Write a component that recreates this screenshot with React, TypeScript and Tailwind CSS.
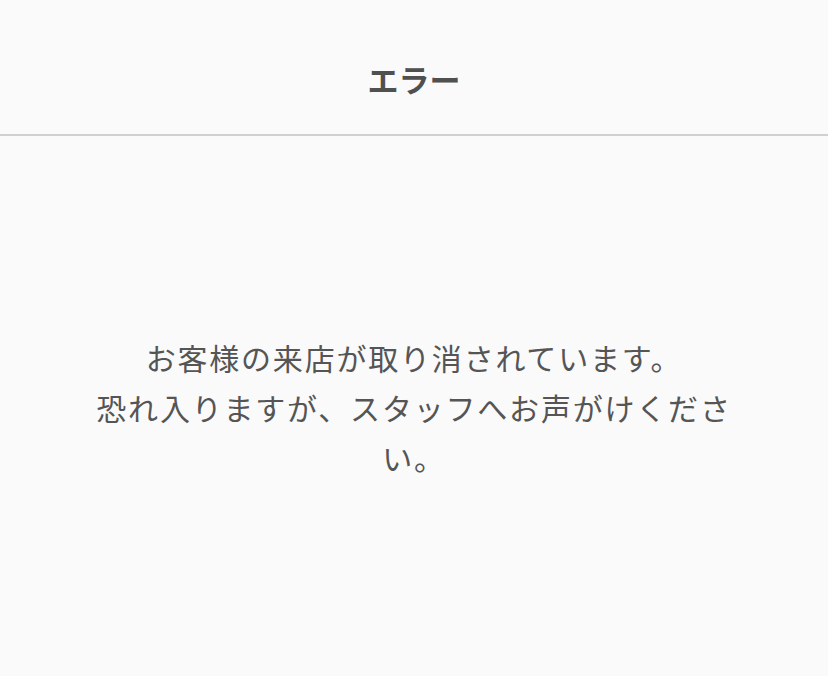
import React from 'react';

const App: React.FC = () => {
    return (
        <div
            className="flex h-[676px] w-full flex-col bg-[#fafafa] text-[#555555]"
            style={{ fontFamily: '"Noto Sans CJK JP", "Noto Sans", sans-serif' }}
        >
            <header className="flex h-[136px] shrink-0 items-center justify-center border-b-2 border-[#d0d0d0] pt-[22px]">
                <h1 className="text-[31px] font-bold leading-none text-[#505050]">エラー</h1>
            </header>
            <main className="flex flex-1 items-center justify-center px-[90px] pt-[2px]">
                <p className="text-center text-[30px] leading-[50px] tracking-[1.8px]">
                    お客様の来店が取り消されています。
                    <br />
                    恐れ入りますが、スタッフへお声がけください。
                </p>
            </main>
        </div>
    );
};

export default App;
